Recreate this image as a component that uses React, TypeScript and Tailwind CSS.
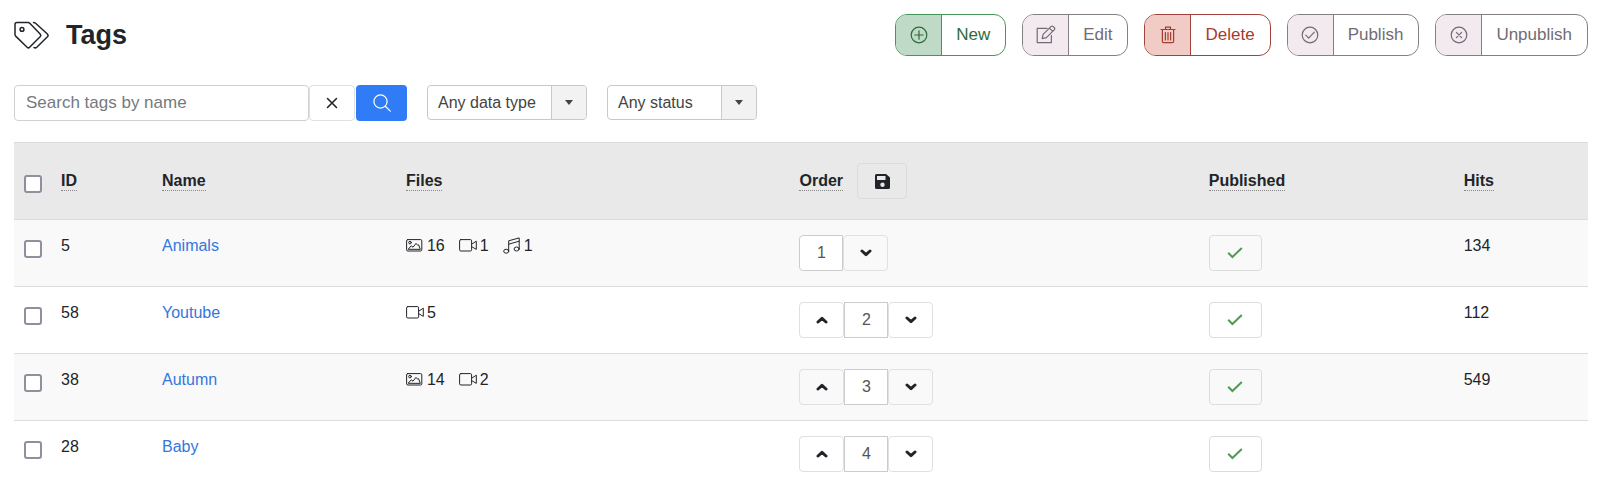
import React from "react";

type FileKind = "image" | "video" | "audio";

type Tag = {
    id: number;
    name: string;
    files: { kind: FileKind; count: number }[];
    hits: number | null;
};

const tags: Tag[] = [
    {
        id: 5,
        name: "Animals",
        files: [
            { kind: "image", count: 16 },
            { kind: "video", count: 1 },
            { kind: "audio", count: 1 },
        ],
        hits: 134,
    },
    { id: 58, name: "Youtube", files: [{ kind: "video", count: 5 }], hits: 112 },
    {
        id: 38,
        name: "Autumn",
        files: [
            { kind: "image", count: 14 },
            { kind: "video", count: 2 },
        ],
        hits: 549,
    },
    { id: 28, name: "Baby", files: [], hits: null },
];

function Icon({ className, box, stroke = 1, children }: {
    className: string;
    box: string;
    stroke?: number;
    children: React.ReactNode;
}) {
    return (
        <svg
            className={className}
            viewBox={box}
            fill="none"
            stroke="currentColor"
            strokeWidth={stroke}
            strokeLinecap="round"
            strokeLinejoin="round"
            aria-hidden="true">
            {children}
        </svg>
    );
}

const icons = {
    plus: (
        <>
            <circle cx="10" cy="10" r="7.8" />
            <path d="M10 5.8v8.4M5.8 10h8.4" />
        </>
    ),
    edit: (
        <>
            <path d="M11 3.4H1.2v14.2h14.2v-7" />
            <path d="M6.2 13.6l.9-4.2 7.8-7.8q1.2-1.1 2.4 0l.9.9q1.1 1.2 0 2.4l-7.8 7.8zM13.4 3.1l3.3 3.3" />
        </>
    ),
    trash: (
        <path d="M3 4.5h14M7.5 4.3V2.2h5v2.1M4.4 4.7v11.8q0 1.2 1.2 1.2h8.8q1.2 0 1.2-1.2V4.7M7.4 7.5v7.5M10 7.5v7.5M12.6 7.5v7.5" />
    ),
    check: (
        <>
            <circle cx="10" cy="10" r="7.8" />
            <path d="M5.8 10.2l2.8 2.9 5.7-6" />
        </>
    ),
    cross: (
        <>
            <circle cx="10" cy="10" r="7.8" />
            <path d="M7.4 7.4l5.2 5.2M12.6 7.4l-5.2 5.2" />
        </>
    ),
};

const fileIcons = {
    image: (
        <>
            <rect x=".6" y="2.6" width="15.2" height="11.4" rx="1.2" />
            <circle cx="4" cy="5.6" r="1.3" />
            <path d="M2.4 12l2.8-3.2L7 10.2l3-3.8 1.6 1.8 1-.4 1.6 4.2z" />
        </>
    ),
    video: (
        <>
            <rect x=".6" y="2.6" width="12" height="11.4" rx="1.2" />
            <path d="M13 7l4.3-2.8v8.2L13 9.8" />
        </>
    ),
    audio: (
        <>
            <ellipse cx="3.2" cy="14.2" rx="2.5" ry="2" />
            <ellipse cx="13.6" cy="12" rx="2.5" ry="2" />
            <path d="M5.7 14V3.8L16.2.9V12M5.7 7.2l10.5-3" />
        </>
    ),
};

function ToolbarButton({ icon, label, outer, inner }: {
    icon: keyof typeof icons;
    label: string;
    outer: string;
    inner: string;
}) {
    return (
        <button type="button" className={`flex h-[42px] overflow-hidden rounded-xl border bg-white text-[17px] ${outer}`}>
            <span className={`flex h-full w-[46px] items-center justify-center border-r ${inner}`}>
                <Icon className="size-5" box="0 0 20 20" stroke={1.2}>{icons[icon]}</Icon>
            </span>
            <span className="flex h-full items-center pr-[15px] pl-[14px]">{label}</span>
        </button>
    );
}

function FilterSelect({ id, label, width }: { id: string; label: string; width: string }) {
    return (
        <div className={`relative h-[35px] ${width}`}>
            <select
                id={id}
                aria-label={label}
                className="h-full w-full appearance-none rounded border border-[#c8c8c8] bg-white pr-9 pl-[10px] text-base text-[#444]">
                <option>{label}</option>
            </select>
            <span className="pointer-events-none absolute inset-y-px right-px flex w-[35px] items-center justify-center rounded-r border-l border-[#c8c8c8] bg-[#f2f2f2]">
                <span className="border-x-4 border-t-[5px] border-x-transparent border-t-[#444]"></span>
            </span>
        </div>
    );
}

function Checkbox({ label }: { label: string }) {
    return (
        <input
            type="checkbox"
            aria-label={label}
            className="mt-[5px] ml-0.5 block size-[18px] appearance-none rounded-[3px] border-2 border-[#8f8f9d] bg-white"
        />
    );
}

function MoveButton({ up = false }: { up?: boolean }) {
    return (
        <button
            type="button"
            aria-label={up ? "Move up" : "Move down"}
            className="flex h-9 w-[45px] items-center justify-center rounded border border-[#dee0e2]">
            <Icon className="h-2 w-3" box="0 0 12 8" stroke={3}>
                <path d={up ? "M2 6l4-3.6L10 6" : "M2 2l4 3.6L10 2"} />
            </Icon>
        </button>
    );
}

function Heading({ children }: { children: string }) {
    return <span className="inline-block border-b border-dotted border-[#888] leading-[19px]">{children}</span>;
}

function TagRow({ tag, index }: { tag: Tag; index: number }) {
    return (
        <tr className="border-t border-[#dcdcdc] align-top leading-[22px] odd:bg-[#f9f9f9]">
            <td className="px-2 py-[15px]"><Checkbox label={`Select ${tag.name}`} /></td>
            <td className="px-2 py-[15px]">{tag.id}</td>
            <td className="px-2 py-[15px]">
                <a href="#" className="text-[#3377dd]">{tag.name}</a>
            </td>
            <td className="px-2 py-[15px]">
                <div className="flex gap-[14px]">
                    {tag.files.map((file) => (
                        <span key={file.kind} className="flex items-center gap-[3px]">
                            <Icon className="size-[18px]" box="0 0 18 18">{fileIcons[file.kind]}</Icon>
                            {file.count}
                        </span>
                    ))}
                </div>
            </td>
            <td className="px-2 py-[15px]">
                <div className="flex">
                    {index > 0 && <MoveButton up />}
                    <input
                        type="text"
                        aria-label={`Order of ${tag.name}`}
                        defaultValue={index + 1}
                        className={`h-9 w-11 border border-[#ccc] bg-white text-center text-[#555] ${index === 0 ? "rounded-l" : ""}`}
                    />
                    <MoveButton />
                </div>
            </td>
            <td className="px-2 py-[15px]">
                <button
                    type="button"
                    aria-label="Published"
                    className="flex h-9 w-[53px] items-center justify-center rounded border border-[#dcdcdc] text-[#4f9a55]">
                    <svg className="h-3 w-4" viewBox="0 0 16 12" fill="none" stroke="currentColor" strokeWidth="2" aria-hidden="true">
                        <path d="M1.2 5.8L5.4 10 14.8 1" />
                    </svg>
                </button>
            </td>
            <td className="px-2 py-[15px]">{tag.hits}</td>
        </tr>
    );
}

export default function App() {
    const neutral = "border-[#857f85] text-[#736b73]";

    return (
        <main className="bg-white px-[14px] pt-[14px] pr-3 font-['Liberation_Sans',Arial,sans-serif] text-base text-[#212529]">
            <header className="flex items-center justify-between">
                <h1 className="flex items-center gap-4 text-[27px] leading-10 font-bold">
                    <Icon className="h-7 w-9" box="0 0 36 28" stroke={1.5}>
                        <path d="M3 1.5h11q1 0 1.8.8l10.3 10.6q1.3 1.4 0 2.8L15.6 26.3q-1.2 1.2-2.5 0L1.9 15.4Q1 14.6 1 13.5v-10q0-2 2-2z" />
                        <path d="M19.5 1.5q1.3 0 2.1.8L33.4 13q1.3 1.4 0 2.8L22.8 26.2q-1.2 1.1-2.8.4" />
                        <circle cx="8" cy="8.4" r="1.9" />
                    </Icon>
                    Tags
                </h1>
                <div className="flex gap-4">
                    <ToolbarButton icon="plus" label="New" outer="border-[#479557] text-[#2f6b38]" inner="border-[#479557] bg-[#bfdac7]" />
                    <ToolbarButton icon="edit" label="Edit" outer={neutral} inner="border-[#857f85] bg-[#f2eaef]" />
                    <ToolbarButton icon="trash" label="Delete" outer="border-[#a0443b] text-[#a63c30]" inner="border-[#a0443b] bg-[#f1cbc6]" />
                    <ToolbarButton icon="check" label="Publish" outer={neutral} inner="border-[#857f85] bg-[#f2eaef]" />
                    <ToolbarButton icon="cross" label="Unpublish" outer={neutral} inner="border-[#857f85] bg-[#f2eaef]" />
                </div>
            </header>

            <form className="mt-[29px] flex items-start">
                <input
                    type="text"
                    aria-label="Search tags by name"
                    placeholder="Search tags by name"
                    className="h-9 w-[295px] rounded border border-[#ced0d2] px-[11px] text-[17px] placeholder:text-[#757a80]"
                />
                <button type="button" aria-label="Clear" className="flex h-9 w-[46px] items-center justify-center rounded border border-[#dee0e2]">
                    <Icon className="size-3" box="0 0 12 12" stroke={1.6}>
                        <path d="M1.5 1.5l9 9M10.5 1.5l-9 9" />
                    </Icon>
                </button>
                <button type="submit" aria-label="Search" className="ml-px flex h-9 w-[51px] items-center justify-center rounded bg-[#2f7cf6] text-white">
                    <Icon className="size-[18px]" box="0 0 18 18" stroke={1.2}>
                        <circle cx="7.5" cy="7.5" r="6.6" />
                        <path d="M12.3 12.3l5 4.8" />
                    </Icon>
                </button>
                <div className="ml-5 flex gap-5">
                    <FilterSelect id="data-type" label="Any data type" width="w-[160px]" />
                    <FilterSelect id="status" label="Any status" width="w-[150px]" />
                </div>
            </form>

            <table className="mt-[21px] w-full table-fixed border-collapse text-left">
                <colgroup>
                    <col className="w-[39px]" />
                    <col className="w-[101px]" />
                    <col className="w-[15.5%]" />
                    <col className="w-[25%]" />
                    <col className="w-[26%]" />
                    <col className="w-[16.2%]" />
                    <col />
                </colgroup>
                <thead>
                    <tr className="border-t border-[#dcdcdc] bg-[#e9e9e9]">
                        <th className="px-2"><Checkbox label="Select all" /></th>
                        <th className="px-2"><Heading>ID</Heading></th>
                        <th className="px-2"><Heading>Name</Heading></th>
                        <th className="px-2"><Heading>Files</Heading></th>
                        <th className="px-2 py-5">
                            <div className="flex items-center gap-[14px]">
                                <Heading>Order</Heading>
                                <button
                                    type="button"
                                    aria-label="Save order"
                                    className="flex h-9 w-[50px] items-center justify-center rounded border border-[#dcdcdc]">
                                    <svg className="size-[15px]" viewBox="0 0 15 15" fill="currentColor" fillRule="evenodd" aria-hidden="true">
                                        <path d="M1.5 0h9.6L15 3.6v9.9a1.5 1.5 0 0 1-1.5 1.5h-12A1.5 1.5 0 0 1 0 13.5v-12A1.5 1.5 0 0 1 1.5 0zM2 2v4h8.5V2zM7.5 8.5a2.2 2.2 0 1 0 0 4.4 2.2 2.2 0 0 0 0-4.4z" />
                                    </svg>
                                </button>
                            </div>
                        </th>
                        <th className="px-2"><Heading>Published</Heading></th>
                        <th className="px-2"><Heading>Hits</Heading></th>
                    </tr>
                </thead>
                <tbody>
                    {tags.map((tag, index) => (
                        <TagRow key={tag.id} tag={tag} index={index} />
                    ))}
                </tbody>
            </table>
        </main>
    );
}
